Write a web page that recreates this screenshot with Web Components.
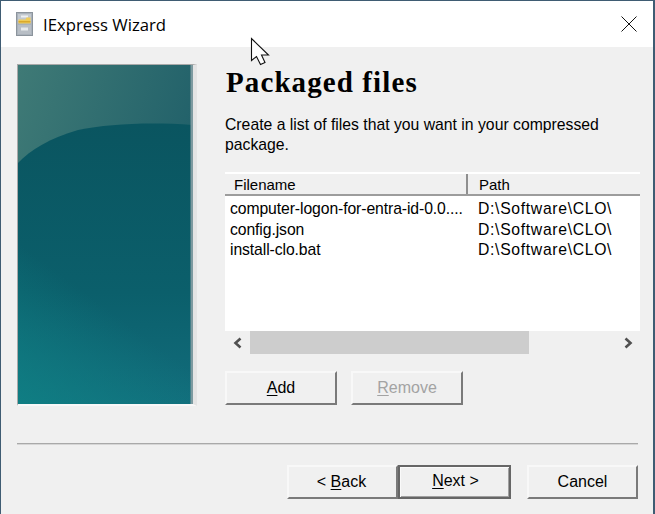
<!DOCTYPE html>
<html lang="en"><head><meta charset="utf-8"><title>IExpress Wizard</title>
<style>
html,body{margin:0;padding:0;background:#f0f0f0}
body{width:655px;height:514px;overflow:hidden;font-family:"Liberation Sans",sans-serif}
</style></head><body>
<wizard-window>
  <title-bar slot="title" label="IExpress Wizard"></title-bar>
  <side-art slot="side"></side-art>
  <wizard-page slot="main" heading="Packaged files">
    Create a list of files that you want in your compressed package.
    <file-list slot="list"></file-list>
    <wiz-button slot="actions" wide key="A" rest="dd"></wiz-button>
    <wiz-button slot="actions" wide disabled key="R" rest="emove"></wiz-button>
  </wizard-page>
  <wiz-button slot="nav" back pre="&lt; " key="B" rest="ack"></wiz-button>
  <wiz-button slot="nav" primary key="N" rest="ext &gt;"></wiz-button>
  <wiz-button slot="nav" gap rest="Cancel"></wiz-button>
</wizard-window>
<script>
function shadow(el,html){el.attachShadow({mode:'open'}).innerHTML=html;}
customElements.define('wizard-window',class extends HTMLElement{constructor(){super();shadow(this,`<style>
:host{display:block;position:relative;box-sizing:border-box;width:655px;height:514px;background:#f0f0f0;border-style:solid;border-color:#3f5c73;border-width:1px 2px 0 1px;color:#000}
.body{display:flex;flex-direction:column;padding:17px 15px 0 16px}
.top{display:flex;gap:28px;height:342px}
.rule{height:2px;background:linear-gradient(#a9a9a9 50%,#d6d6d6 50%);margin-top:37px}
.nav{display:flex;justify-content:flex-end;margin-top:20px}
svg{position:absolute;left:249px;top:36px}
</style>
<slot name="title"></slot>
<div class="body"><div class="top"><slot name="side"></slot><slot name="main"></slot></div>
<div class="rule"></div><div class="nav"><slot name="nav"></slot></div></div>
<svg width="22" height="30" viewBox="0 0 22 30"><path d="M1.5 1.5V23.5L6.5 19.5L10.5 27.5L15 25.5L11.5 18H18.5Z" fill="#fff" stroke="#111" stroke-width="1.1" stroke-linejoin="miter"/></svg>`);}});
customElements.define('title-bar',class extends HTMLElement{constructor(){super();shadow(this,`<style>
:host{display:flex;align-items:center;height:46px;background:#fff;padding-left:15px;font:16.7px "Open Sans",sans-serif}
.t{margin-left:9px;flex:1;color:#000}
.x{margin-right:16px;display:block}
.i{display:block}
</style>
<svg class="i" width="18" height="25" viewBox="0 0 18 25"><rect x=".5" y=".5" width="16" height="23" fill="#aab2bb" stroke="#8c949c"/><rect x="2" y="2" width="13" height="9" fill="#c3c9cf"/><rect x="2" y="13" width="13" height="9" fill="#b8bec5"/><rect x="5" y="3.5" width="7" height="2" fill="#eef0f2"/><path d="M2.5 7.5h7l1-2h4v6h-12z" fill="#f0cc58"/><rect x="2.5" y="9" width="12" height="1.5" fill="#d9a92e"/><rect x="5" y="15.5" width="7" height="3" fill="#e6e9ec"/></svg>
<span class="t">${this.getAttribute('label')}</span>
<svg class="x" width="16" height="16" viewBox="0 0 16 16"><path d="M.5.5 15.5 15.5M15.5.5.5 15.5" stroke="#111" stroke-width="1" fill="none"/></svg>`);}});
customElements.define('side-art',class extends HTMLElement{constructor(){super();shadow(this,`<style>
:host{display:block;box-sizing:border-box;width:180px;height:342px;border-style:solid;border-width:1px 4px 2px 1px;border-color:#a9a9a9 #e4e4e4 #f8f8f8 #a9a9a9}
svg{display:block}
</style>
<svg width="175" height="339" viewBox="0 0 175 339"><defs>
<linearGradient id="a" x1="0" y1="0" x2="1" y2=".55"><stop offset="0" stop-color="#3f7a76"/><stop offset="1" stop-color="#1d5d68"/></linearGradient>
<linearGradient id="b" gradientUnits="userSpaceOnUse" x1="0" y1="60" x2="0" y2="339"><stop offset="0" stop-color="#0a5560"/><stop offset=".6" stop-color="#0b5f6b"/><stop offset="1" stop-color="#126d7c"/></linearGradient>
<linearGradient id="c" gradientUnits="userSpaceOnUse" x1="0" y1="339" x2="110" y2="190"><stop offset="0" stop-color="#0f8285" stop-opacity=".8"/><stop offset=".7" stop-color="#0f8285" stop-opacity="0"/></linearGradient>
</defs>
<rect width="175" height="339" fill="url(#a)"/>
<path d="M0 98C12 85 32 73 60 65C90 59 130 57 175 60V339H0Z" fill="url(#b)"/>
<rect y="130" width="175" height="209" fill="url(#c)"/>
<rect x="172.5" width="2.5" height="339" fill="#7d9aa0"/></svg>`);}});
customElements.define('wizard-page',class extends HTMLElement{constructor(){super();shadow(this,`<style>
:host{display:flex;flex-direction:column;width:416px;font:15.75px/20px "Liberation Sans",sans-serif}
h1{margin:0 0 13px;font:bold 29px/36px "Liberation Serif",serif;letter-spacing:1.1px;padding-left:1px}
.d{width:400px;margin-bottom:17px;padding-top:2px}
.a{display:flex;gap:14px;margin-top:17px}
</style><h1>${this.getAttribute('heading')}</h1><div class="d"><slot></slot></div><slot name="list"></slot><div class="a"><slot name="actions"></slot></div>`);}});
customElements.define('file-list',class extends HTMLElement{constructor(){super();
const rows=['computer-logon-for-entra-id-0.0....','config.json','install-clo.bat'];
shadow(this,`<style>
:host{display:block;width:415px;font:15.75px/20px "Liberation Sans",sans-serif}
.hd{display:grid;grid-template-columns:243px 1fr;height:24px;box-sizing:border-box;background:#f0f0f0;border-top:2px solid #fff;border-bottom:2px solid #9c9c9c;font-size:15px}
.hd span{padding:1px 0 0 9px;line-height:20px;overflow:hidden}
.hd span:first-child{border-right:2px solid #8f8f8f}
.hd span:last-child{padding-left:11px}
.bd{height:135px;background:#fff;box-sizing:border-box;padding-top:3px}
.r{display:grid;grid-template-columns:248px 1fr;height:20.5px;padding-left:5px;white-space:nowrap}
.r span:first-child{letter-spacing:-.1px}
.r span:last-child{overflow:hidden;letter-spacing:.67px}
.sb{display:flex;align-items:center;height:23px;background:#f0f0f0}
.btn{width:25px;display:flex;justify-content:center;flex:none}
.tr{flex:1;height:100%;display:flex}
.th{width:279px;background:#cdcdcd}
</style><div class="hd"><span>Filename</span><span>Path</span></div><div class="bd">
${rows.map(r=>`<div class="r"><span>${r}</span><span>D:\\Software\\CLO\\</span></div>`).join('')}</div>
<div class="sb"><span class="btn"><svg width="12" height="12" viewBox="0 0 12 12"><path d="M8.5 1.5 3.5 6l5 4.5" fill="none" stroke="#505050" stroke-width="2.6"/></svg></span><span class="tr"><span class="th"></span></span><span class="btn"><svg width="12" height="12" viewBox="0 0 12 12"><path d="M3.5 1.5 8.500 6l-5 4.5" fill="none" stroke="#505050" stroke-width="2.6"/></svg></span></div>`);}});
customElements.define('wiz-button',class extends HTMLElement{constructor(){super();
const g=n=>this.getAttribute(n)||'';const k=g('key');
shadow(this,`<style>
:host{display:block;box-sizing:border-box;width:112px;height:34px;background:#f0f0f0;font:16px/20px "Liberation Sans",sans-serif;color:#000;text-align:center;padding-top:5px;
border-style:solid;border-width:2px;border-color:#f8f8f8 #7a7a7a #7a7a7a #f8f8f8;box-shadow:inset 0 0 0 1px #f0f0f0}
:host([slot=nav]){width:111px}
:host([back]){padding-right:2px}
:host([gap]){margin-left:16px}
:host([primary]){width:113px;border:2.5px solid #666;padding:4px 0 0 2px;box-shadow:inset 1px 1px 0 #fafafa,inset -1px -1px 0 #a0a0a0}
:host([disabled]){color:#a3a3a3}
u{text-underline-offset:2px}
</style>${g('pre')}${k?`<u>${k}</u>`:''}${g('rest')}`);}});
</script></body></html>
